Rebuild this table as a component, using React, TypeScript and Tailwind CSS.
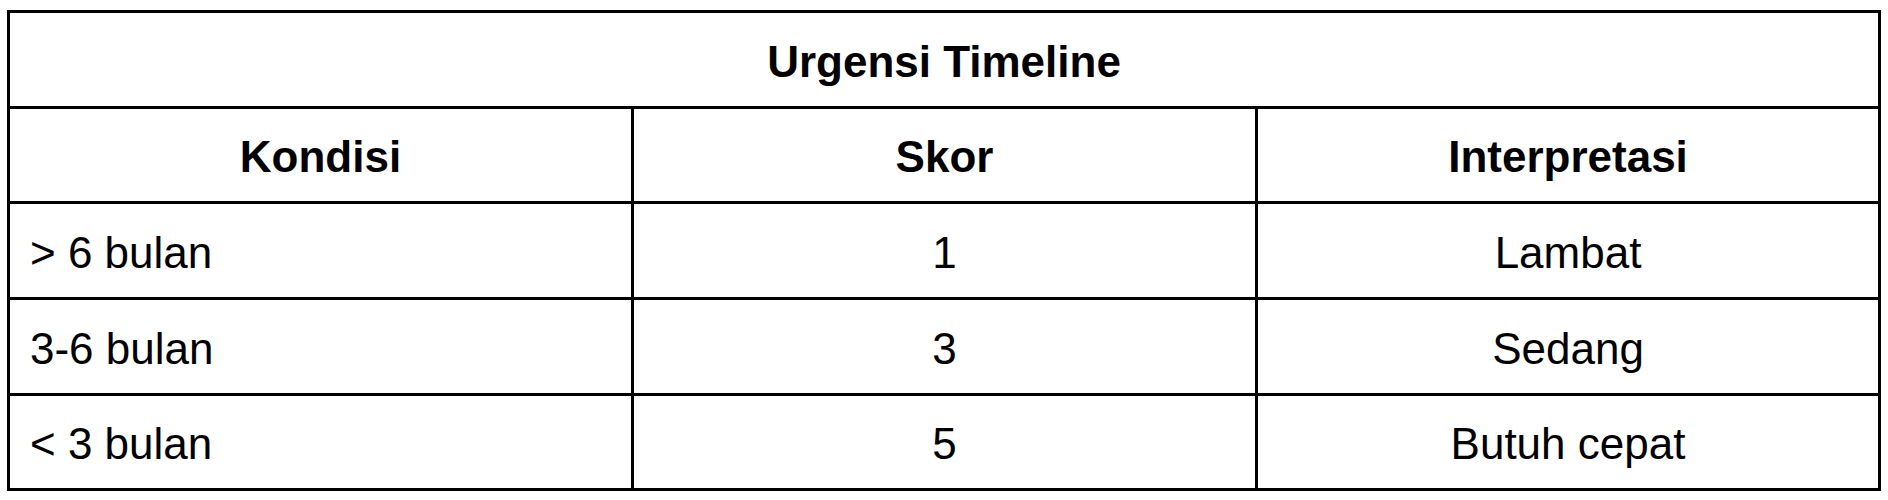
const rows = [
  { kondisi: "> 6 bulan", skor: "1", interpretasi: "Lambat", h: "h-[96px]" },
  { kondisi: "3-6 bulan", skor: "3", interpretasi: "Sedang", h: "h-[96px]" },
  { kondisi: "< 3 bulan", skor: "5", interpretasi: "Butuh cepat", h: "h-[95px]" },
];

const cell = "border-r-[3px] border-b-[3px] border-black align-middle";

export default function App() {
  return (
    <div className="bg-white pt-[10px] px-[7px] pb-[9px] text-black font-['Liberation_Sans',Arial,sans-serif]">
      <table className="w-full table-fixed border-separate border-spacing-0 border-l-[3px] border-t-[3px] border-black text-[44px] leading-none">
        <colgroup>
          <col className="w-[624px]" />
          <col className="w-[624px]" />
          <col className="w-[623px]" />
        </colgroup>
        <thead>
          <tr>
            <th colSpan={3} className={`${cell} h-[96px] pt-[4px] text-center font-bold`}>
              Urgensi Timeline
            </th>
          </tr>
          <tr>
            <th className={`${cell} h-[95px] pt-[4px] text-center font-bold`}>Kondisi</th>
            <th className={`${cell} h-[95px] pt-[4px] text-center font-bold`}>Skor</th>
            <th className={`${cell} h-[95px] pt-[4px] text-center font-bold`}>Interpretasi</th>
          </tr>
        </thead>
        <tbody>
          {rows.map((r) => (
            <tr key={r.kondisi}>
              <td className={`${cell} ${r.h} pt-[4px] pl-[20px] text-left`}>{r.kondisi}</td>
              <td className={`${cell} ${r.h} pt-[4px] text-center`}>{r.skor}</td>
              <td className={`${cell} ${r.h} pt-[4px] text-center`}>{r.interpretasi}</td>
            </tr>
          ))}
        </tbody>
      </table>
    </div>
  );
}
